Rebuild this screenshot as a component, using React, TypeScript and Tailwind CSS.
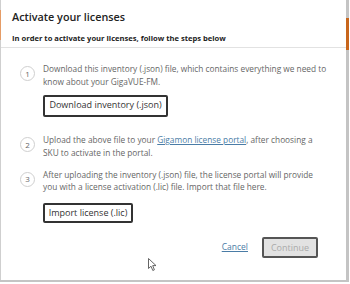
import React from "react";

function Step({ n, children, mt }: { n: string; children: React.ReactNode; mt: string }) {
  return (
    <div className={`flex ${mt}`}>
      <div className="mt-[3px] w-[15px] h-[15px] shrink-0 rounded-full border border-[#cfcfcf] flex items-center justify-center text-[8px] leading-none text-[#666]">
        {n}
      </div>
      <div className="ml-[8px] flex flex-col items-start">{children}</div>
    </div>
  );
}

export default function App() {
  return (
    <div
      className="w-[350px] h-[284px] bg-white flex flex-col overflow-hidden"
      style={{ fontFamily: '"Open Sans", "Noto Sans", sans-serif' }}
    >
      <div className="flex h-[280px]">
        <div className="w-px flex flex-col">
          <div className="h-[10px] bg-[#cfcfcf]" />
          <div className="h-[30px] bg-[#e59c66]" />
          <div className="flex-1 bg-[#cfcfcf]" />
        </div>
        <div className="w-[345px] bg-white flex flex-col relative">
          <div className="px-[11px] pt-[9px] pb-[3px] border-b border-[#e2e2e2]">
            <div className="text-[10.8px] leading-[15px] font-semibold text-[#222]">Activate your licenses</div>
            <div className="mt-2 text-[7.6px] leading-[12px] font-bold text-[#222]">
              In order to activate your licenses, follow the steps below
            </div>
          </div>
          <div className="pl-[19px] pt-[15px] flex flex-col text-[8.3px] leading-[12.5px] text-[#666]">
            <Step n="1" mt="mt-0">
              <div>
                Download this inventory (.json) file, which contains everything we need to
                <br />
                know about your GigaVUE-FM.
              </div>
              <button className="mt-[6.5px] h-[22px] w-[125px] border-2 border-[#333] rounded-[2px] bg-white text-[9px] text-[#333] flex items-center justify-center">
                Download inventory (.json)
              </button>
            </Step>
            <Step n="2" mt="mt-[17.5px]">
              <div>
                Upload the above file to your{" "}
                <span className="text-[#4a7ca6] underline">Gigamon license portal</span>, after choosing a
                <br />
                SKU to activate in the portal.
              </div>
            </Step>
            <Step n="3" mt="mt-[9.5px]">
              <div>
                After uploading the inventory (.json) file, the license portal will provide
                <br />
                you with a license activation (.lic) file. Import that file here.
              </div>
              <button className="mt-[9.5px] h-[20px] w-[90px] border-2 border-[#333] rounded-[2px] bg-white text-[9px] text-[#333] flex items-center justify-center">
                Import license (.lic)
              </button>
            </Step>
          </div>
          <div className="mt-[14px] pr-[28px] flex justify-end items-center">
            <span className="text-[8.5px] text-[#4a7ca6] underline">Cancel</span>
            <div className="ml-[14px] h-[21px] w-[56px] border-2 border-[#555] rounded-[2px] bg-[#e2e2e2] text-[9px] text-[#aaa] flex items-center justify-center">
              Continue
            </div>
          </div>
          <svg
            className="absolute left-[147px] top-[258px]"
            width="10"
            height="14"
            viewBox="0 0 10 14"
          >
            <path
              d="M0.5 0.5 L0.5 10.5 L3 8.2 L4.8 12.5 L6.4 11.8 L4.7 7.6 L8 7.6 Z"
              fill="white"
              stroke="#555"
              strokeWidth="0.9"
              strokeLinejoin="round"
            />
          </svg>
        </div>
        <div className="w-[3px] flex flex-col">
          <div className="h-[18px] bg-[#c4c4c4]" />
          <div className="h-[32px] bg-[#c8661c]" />
          <div className="flex-1 bg-[#c4c4c4]" />
        </div>
        <div className="w-px bg-white" />
      </div>
      <div className="h-[2px] w-[349px] bg-[#c4c4c4]" />
    </div>
  );
}
